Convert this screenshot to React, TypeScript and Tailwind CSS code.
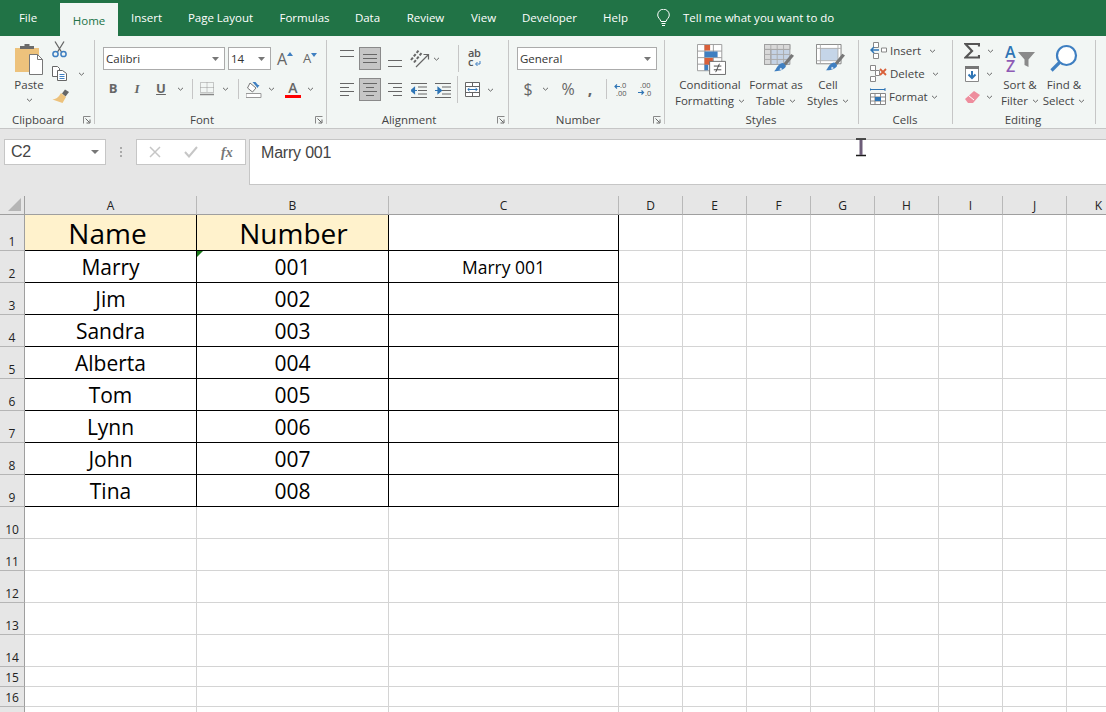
import { FC, ReactNode } from "react"

const ui = "font-['Open_Sans',sans-serif]"

const Chevron: FC<{ className?: string }> = ({ className = "" }) => (
  <svg width="7" height="4" viewBox="0 0 7 4" className={`shrink-0 ${className}`}>
    <path d="M1 0.800 3.500 3.200 6 0.800" fill="none" stroke="#666" strokeWidth="1" />
  </svg>
)

const Launcher: FC = () => (
  <svg width="8" height="8" viewBox="0 0 8 8" className="ml-auto mr-[3px] shrink-0">
    <path d="M0.5 7.5V0.5H7.5" fill="none" stroke="#888" />
    <path d="M2.5 2.5 6.5 6.5M7 3.5V7H3.5" fill="none" stroke="#666" />
  </svg>
)

const Group: FC<{ label: string; labelWidth: string; launcher?: boolean; inner: string; children: ReactNode }> = ({
  label,
  labelWidth,
  launcher,
  inner,
  children,
}) => (
  <div className="flex h-full shrink-0">
    <div className={`flex h-full flex-col ${inner}`}>
      <div className="h-[76px]">{children}</div>
      <div className="flex h-[16px] items-center">
        <span className={`text-center text-[11.5px] leading-4 ${labelWidth}`}>{label}</span>
        {launcher && <Launcher />}
      </div>
    </div>
    <div className="mt-[4px] h-[84px] w-px bg-[#c6c6c6]" />
  </div>
)

const Combo: FC<{ value: string; width: string }> = ({ value, width }) => (
  <div className={`flex h-[23px] items-center justify-between border border-[#ababab] bg-white pl-[2px] pr-[5px] text-[11.5px] text-[#333] ${width}`}>
    <span>{value}</span>
    <svg width="7" height="4" viewBox="0 0 7 4">
      <path d="M0 0h7L3.5 4z" fill="#777" />
    </svg>
  </div>
)

const Sep: FC<{ className: string }> = ({ className }) => <div className={`w-px bg-[#c6c6c6] ${className}`} />

const Lines: FC<{ lines: [number, number, number][]; w?: number; h?: number; className?: string; children?: ReactNode }> = ({
  lines,
  w = 14,
  h = 23,
  className = "",
  children,
}) => (
  <svg width={w} height={h} viewBox={`0 0 ${w} ${h}`} className={`shrink-0 ${className}`}>
    {lines.map(([x1, x2, y]) => (
      <path key={`${x1}-${y}`} d={`M${x1} ${y}H${x2}`} stroke="#666" strokeWidth="1" />
    ))}
    {children}
  </svg>
)

const PasteIcon = () => (
  <svg width="28" height="32" viewBox="0 0 28 32">
    <path d="M0 5h24v24H0z" fill="#edc27c" />
    <path d="M5 6V3h4.500V1h5v2H19v3z" fill="#6b6b6b" />
    <path d="M14.500 11.500h8l5 5v15h-13z" fill="#fff" stroke="#777" />
    <path d="M22.500 11.500v5h5" fill="none" stroke="#777" />
  </svg>
)

const ScissorsIcon = () => (
  <svg width="15" height="17" viewBox="0 0 15 17">
    <path d="M3 0.500 9.500 11M12 0.500 5.500 11" stroke="#666" strokeWidth="1.300" fill="none" />
    <circle cx="3.500" cy="13" r="2.600" fill="none" stroke="#3f7fc1" strokeWidth="1.500" />
    <circle cx="11.500" cy="13" r="2.600" fill="none" stroke="#3f7fc1" strokeWidth="1.500" />
  </svg>
)

const CopyIcon = () => (
  <svg width="15" height="15" viewBox="0 0 15 15">
    <path d="M0.500 0.500h5l2 2v8h-7z" fill="#fff" stroke="#666" />
    <path d="M5.500 4.500h5l4 3v7h-9z" fill="#fff" stroke="#666" />
    <path d="M7.500 8.500h5M7.500 10.500h5M7.500 12.500h5" stroke="#3f7fc1" />
  </svg>
)

const BrushIcon = () => (
  <svg width="18" height="16" viewBox="0 0 18 16">
    <path d="M10 5.500 13 1.500l4 2.500-3.500 4.500z" fill="#666" />
    <path d="M9 5l5 4-3.500 6-10-3.500c3 0 6-2 8.500-6.500z" fill="#edc27c" />
  </svg>
)

const BorderIcon = () => (
  <svg width="14" height="14" viewBox="0 0 14 14">
    <path d="M0.500 0.500h13v10h-13zM7 0.500v10M0.500 5.500h13" fill="none" stroke="#999" strokeDasharray="1 1" />
    <path d="M0 12.500h14" stroke="#888" strokeWidth="1.500" />
  </svg>
)

const FillIcon = () => (
  <svg width="17" height="17" viewBox="0 0 17 17">
    <path d="M4 2 10 7 6.500 11 1.500 7z" fill="#fff" stroke="#777" />
    <path d="M6.500 1h3l2.500 3 1.500 0-2 3z" fill="#3f7fc1" />
    <path d="M0 12.500h15v4H0z" fill="#fff" stroke="#999" />
  </svg>
)

const BigA: FC<{ size: string; up?: boolean }> = ({ size, up }) => (
  <span className={`flex items-start text-[#666] ${size}`}>
    <span className="leading-none">A</span>
    <svg width="6" height="4" viewBox="0 0 6 4" className="mt-[1px]">
      <path d={up ? "M0 4 3 0l3 4z" : "M0 0h6L3 4z"} fill="#3f7fc1" />
    </svg>
  </span>
)

const OrientIcon = () => (
  <svg width="20" height="23" viewBox="0 0 20 23">
    <path d="M1 13 9 3M4 15.500 12 5.500" stroke="#666" strokeWidth="2" strokeDasharray="3 1.500" />
    <path d="M6 20 18 8M13.500 7.500H18.500V12.500" fill="none" stroke="#666" strokeWidth="1.200" />
  </svg>
)

const IndentIcon: FC<{ flip?: boolean }> = ({ flip }) => (
  <svg width="16" height="23" viewBox="0 0 16 23">
    <path d="M0 5.500h16M7 9h9M7 12.500h9M7 16h9M0 19.500h16" stroke="#666" />
    <path d={flip ? "M0 12.500h4M3 9.500l3.500 3-3.500 3z" : "M6 12.500H2M3.500 9.500 0 12.500l3.500 3z"} stroke="#2f75b5" strokeWidth="1.200" fill="#2f75b5" />
  </svg>
)

const WrapIcon = () => (
  <svg width="13" height="23" viewBox="0 0 13 23" className="overflow-visible">
    <text x="0" y="10" fontSize="11" fontWeight="600" fill="#555" fontFamily="Open Sans" letterSpacing="-0.3">ab</text>
    <text x="0" y="19" fontSize="11" fontWeight="600" fill="#555" fontFamily="Open Sans">c</text>
    <path d="M12 14v3H8M9.500 15 7.500 17l2 2" fill="none" stroke="#3f7fc1" />
  </svg>
)

const MergeIcon = () => (
  <svg width="15" height="15" viewBox="0 0 15 15">
    <path d="M0.500 0.500h14v14H0.500zM0.500 4.500h14M0.500 10.500h14M7.500 0.500v4M7.500 10.500v4" fill="#fff" stroke="#666" />
    <path d="M3 7.500h9M4.500 5.800 2.800 7.500l1.700 1.700M10.500 5.800l1.700 1.700-1.700 1.700" fill="none" stroke="#2f75b5" />
  </svg>
)

const DecimalIcon: FC<{ more?: boolean }> = ({ more }) => (
  <svg width="14" height="15" viewBox="0 0 14 15" className="overflow-visible">
    {more ? (
      <>
        <text x="2" y="6" fontSize="7.500" fill="#555" fontFamily="Open Sans">.00</text>
        <text x="7" y="14" fontSize="7.500" fill="#555" fontFamily="Open Sans">.0</text>
        <path d="M0 10.500h5M3.500 8.500l2 2-2 2" fill="none" stroke="#2f75b5" strokeWidth="1.200" />
      </>
    ) : (
      <>
        <text x="6" y="6" fontSize="7.500" fill="#555" fontFamily="Open Sans">.0</text>
        <text x="2" y="14" fontSize="7.500" fill="#555" fontFamily="Open Sans">.00</text>
        <path d="M1 4.500h5M3 2.500l-2 2 2 2" fill="none" stroke="#2f75b5" strokeWidth="1.200" />
      </>
    )}
  </svg>
)

const CondIcon = () => (
  <svg width="29" height="31" viewBox="0 0 31 33">
    <path d="M0.500 0.500h26v28h-26zM0.500 7.500h26M0.500 14.500h26M0.500 21.500h26M8.500 0.500v28M17.500 0.500v28" fill="#fff" stroke="#999" />
    <path d="M8 1h6v6H8zM8 15h9v7H8z" fill="#d9603a" />
    <path d="M8 8h14v6H8zM8 22h4v6H8z" fill="#3f7fc1" />
    <path d="M13.500 18.500h17v14h-17z" fill="#fff" stroke="#666" />
    <path d="M18 23.500h8M18 27.500h8M24 21l-4 9" stroke="#444" fill="none" />
  </svg>
)

const RollerBrush = () => (
  <>
    <path d="M21 22 30 11l3 2-9 11z" fill="#777" />
    <path d="M20 21c2 0 4 2 4 4-3 4-8 5-13 5 3-2 3-7 9-9z" fill="#3f7fc1" />
    <path d="M18 26c1 0 2 1 2 2-1 .7-2 .7-3 0z" fill="#d7e4f2" />
  </>
)

const TableStyleIcon = () => (
  <svg width="30" height="30" viewBox="0 0 33 33">
    <path d="M0.500 0.500h28v22H0.500z" fill="#c5d3e5" stroke="#999" />
    <path d="M0.500 0.500h28v5.500H0.500zM0.500 6v16.500h7V6z" fill="#d9d9d9" stroke="#999" />
    <path d="M7.500 0.500v22M14.500 0.500v22M21.500 0.500v22M0.500 6h28M0.500 11.500h28M0.500 17h28" fill="none" stroke="#aaa" />
    <RollerBrush />
  </svg>
)

const CellStyleIcon = () => (
  <svg width="29" height="29" viewBox="0 0 33 33">
    <path d="M0.500 0.500h28v22H0.500z" fill="#fff" stroke="#777" />
    <path d="M5 5h20v14H5z" fill="#c5d5e8" />
    <path d="M0.500 5h28M5 0.500v22M25 0.500v22M0.500 19h28" fill="none" stroke="#aaa" />
    <RollerBrush />
  </svg>
)

const InsertIcon = () => (
  <svg width="17" height="17" viewBox="0 0 17 17">
    <path d="M3.500 0.500h5v5h-5zM3.500 11.500h5v5h-5zM11.500 6h5v4h-5z" fill="#fff" stroke="#888" />
    <path d="M9 8H1M4 5 1 8l3 3" fill="none" stroke="#2f75b5" strokeWidth="1.500" />
  </svg>
)

const DeleteIcon = () => (
  <svg width="17" height="17" viewBox="0 0 17 17">
    <path d="M0.500 0.500h5v5h-5zM0.500 11.500h5v5h-5zM5.500 5.500h4v5h-4z" fill="#fff" stroke="#888" />
    <path d="M10 4l6 6M16 4l-6 6" stroke="#d9603a" strokeWidth="1.800" />
  </svg>
)

const FormatIcon = () => (
  <svg width="16" height="17" viewBox="0 0 16 17">
    <path d="M0 1.500h15M0 0v3M15 0v3" stroke="#2f75b5" />
    <path d="M0.500 5.500h15v11h-15zM0.500 9h15M0.500 13h15M5 5.500v11M10.500 5.500v11" fill="#fff" stroke="#888" />
    <path d="M5 9h6v4H5z" fill="#2f75b5" />
  </svg>
)

const SigmaIcon = () => (
  <svg width="16" height="16" viewBox="0 0 16 16">
    <path d="M15 3.500V1H1.500L8 8 1.500 14.500H15V12" fill="none" stroke="#555" strokeWidth="2.200" />
  </svg>
)

const FillDownIcon = () => (
  <svg width="14" height="16" viewBox="0 0 14 16">
    <path d="M0.500 0.500h13v15h-13z" fill="#fff" stroke="#888" />
    <path d="M0 0h14v3H0z" fill="#777" />
    <path d="M7 5v7M3.500 8.500 7 12l3.500-3.500" fill="none" stroke="#2f75b5" strokeWidth="2" />
  </svg>
)

const EraserIcon = () => (
  <svg width="15" height="14" viewBox="0 0 15 14">
    <path d="M9 1 15 5 8 13H3L0 9z" fill="#ee8d9d" />
    <path d="M3.500 5.500 9 10" stroke="#fff" />
  </svg>
)

const SortIcon = () => (
  <svg width="30" height="29" viewBox="0 0 30 29" className="overflow-visible">
    <text x="0" y="14" fontSize="16" fontWeight="600" fill="#2f75b5" fontFamily="Open Sans">A</text>
    <text x="1" y="28" fontSize="16" fontWeight="600" fill="#8e5bb5" fontFamily="Open Sans">Z</text>
    <path d="M13 8h17l-6.500 7.500V23l-4-2v-5.500z" fill="#8a8a8a" />
  </svg>
)

const SearchIcon = () => (
  <svg width="28" height="28" viewBox="0 0 28 28">
    <circle cx="16.500" cy="11.500" r="9.500" fill="#fff" stroke="#3f7fc1" strokeWidth="2.200" />
    <path d="M9.500 18.500 1.500 26.500" stroke="#3f7fc1" strokeWidth="3.200" />
  </svg>
)

const BulbIcon = () => (
  <svg width="13" height="18" viewBox="0 0 13 18">
    <path d="M4 12.500C3.500 10 .7 9 .7 6a5.800 5.800 0 0 1 11.600 0c0 3-2.800 4-3.300 6.500z" fill="none" stroke="#fff" />
    <path d="M4.500 14.500h4M5 16.500h3" stroke="#fff" />
  </svg>
)

const Tab: FC<{ label: string; w: string; active?: boolean }> = ({ label, w, active }) => (
  <div
    className={`flex h-full shrink-0 items-center justify-center text-[11.5px] ${w} ${
      active ? "mt-[6px] h-[30px] bg-[#f2f6f4] text-[#217346]" : "text-white"
    }`}
  >
    {label}
  </div>
)

const TabBar = () => (
  <div className="flex h-[36px] items-center bg-[#217346] text-white">
    <Tab label="File" w="w-[56px] mr-[4px]" />
    <Tab label="Home" w="w-[58px]" active />
    <Tab label="Insert" w="w-[57px]" />
    <Tab label="Page Layout" w="w-[91px]" />
    <Tab label="Formulas" w="w-[77px]" />
    <Tab label="Data" w="w-[49px]" />
    <Tab label="Review" w="w-[67px]" />
    <Tab label="View" w="w-[49px]" />
    <Tab label="Developer" w="w-[83px]" />
    <Tab label="Help" w="w-[49px]" />
    <div className="ml-[17px] shrink-0">
      <BulbIcon />
    </div>
    <span className="ml-[13px] text-[11.5px]">Tell me what you want to do</span>
  </div>
)

const Clipboard = () => (
  <Group label="Clipboard" labelWidth="w-[76px]" inner="w-[94px]" launcher>
    <div className="flex">
      <div className="ml-[15px] flex w-[28px] flex-col items-center pt-[7px]">
        <PasteIcon />
        <span className="mt-[2px] text-[11.5px] leading-4">Paste</span>
        <Chevron className="mt-[5px]" />
      </div>
      <div className="ml-[9px] flex flex-col items-start pt-[5px]">
        <ScissorsIcon />
        <div className="mt-[8px] flex items-center">
          <CopyIcon />
          <Chevron className="ml-[11px]" />
        </div>
        <div className="mt-[7px]">
          <BrushIcon />
        </div>
      </div>
    </div>
  </Group>
)

const FontGroup = () => (
  <Group label="Font" labelWidth="w-[214px]" inner="w-[231px]" launcher>
    <div className="pl-[8px] pt-[11px]">
      <div className="flex items-center">
        <Combo value="Calibri" width="w-[122px]" />
        <Combo value="14" width="w-[43px] ml-[3px]" />
        <div className="ml-[6px] w-[20px]">
          <BigA size="text-[16px]" up />
        </div>
        <div className="ml-[6px] w-[16px]">
          <BigA size="text-[13px]" />
        </div>
      </div>
      <div className="mt-[10px] flex h-[18px] items-center text-[13px] text-[#666]">
        <span className="w-[20px] text-center font-bold">B</span>
        <span className="ml-[4px] w-[20px] text-center font-['Liberation_Serif',serif] font-bold italic">I</span>
        <span className="ml-[4px] w-[20px] text-center font-bold underline">U</span>
        <Chevron className="ml-[6px]" />
        <Sep className="ml-[8px] h-[20px]" />
        <div className="ml-[7px]">
          <BorderIcon />
        </div>
        <Chevron className="ml-[8px]" />
        <Sep className="ml-[9px] h-[20px]" />
        <div className="ml-[7px]">
          <FillIcon />
        </div>
        <Chevron className="ml-[5px]" />
        <div className="ml-[10px] flex w-[16px] flex-col items-center">
          <span className="text-[14px] font-semibold leading-[15px]">A</span>
          <div className="h-[3px] w-[16px] bg-[#ff0000]" />
        </div>
        <Chevron className="ml-[6px]" />
      </div>
    </div>
  </Group>
)

const AlignBtn: FC<{ active?: boolean; className?: string; children: ReactNode }> = ({ active, className = "", children }) => (
  <div className={`flex h-[23px] w-[22px] shrink-0 items-center justify-center ${active ? "border border-[#8a8a8a] bg-[#c6c6c6]" : ""} ${className}`}>
    {children}
  </div>
)

const Alignment = () => (
  <Group label="Alignment" labelWidth="w-[164px]" inner="w-[181px]" launcher>
    <div className="pl-[9px] pt-[11px]">
      <div className="flex h-[23px] items-center">
        <AlignBtn>
          <Lines lines={[[0, 14, 3.5], [0, 14, 9.5]]} />
        </AlignBtn>
        <AlignBtn active className="ml-[1px]">
          <Lines lines={[[0, 14, 5.5], [0, 14, 9.5], [0, 14, 13.5]]} h={19} />
        </AlignBtn>
        <AlignBtn className="ml-[3px]">
          <Lines lines={[[0, 14, 13.5], [0, 14, 19.5]]} />
        </AlignBtn>
        <div className="ml-[4px]">
          <OrientIcon />
        </div>
        <Chevron className="ml-[3px]" />
        <Sep className="ml-[18px] h-[27px]" />
        <div className="ml-[9px]">
          <WrapIcon />
        </div>
      </div>
      <div className="mt-[8px] flex h-[23px] items-center">
        <AlignBtn>
          <Lines lines={[[0, 14, 5.5], [0, 9, 9.5], [0, 14, 13.5], [0, 9, 17.5]]} />
        </AlignBtn>
        <AlignBtn active className="ml-[1px]">
          <Lines lines={[[0, 14, 3.5], [3, 11, 7.5], [0, 14, 11.5], [3, 11, 15.5]]} h={19} />
        </AlignBtn>
        <AlignBtn className="ml-[3px]">
          <Lines lines={[[0, 14, 5.5], [5, 14, 9.5], [0, 14, 13.5], [5, 14, 17.5]]} />
        </AlignBtn>
        <div className="ml-[5px]">
          <IndentIcon />
        </div>
        <div className="ml-[8px]">
          <IndentIcon flip />
        </div>
        <Sep className="ml-[6px] h-[27px]" />
        <div className="ml-[7px]">
          <MergeIcon />
        </div>
        <Chevron className="ml-[7px]" />
      </div>
    </div>
  </Group>
)

const NumberGroup = () => (
  <Group label="Number" labelWidth="w-[138px]" inner="w-[155px]" launcher>
    <div className="pl-[8px] pt-[11px]">
      <Combo value="General" width="w-[140px]" />
      <div className="mt-[10px] flex h-[18px] items-center text-[#666]">
        <span className="w-[22px] text-center text-[16px]">$</span>
        <Chevron className="ml-[3px]" />
        <span className="ml-[10px] w-[18px] text-center text-[16px]">%</span>
        <span className="ml-[8px] w-[10px] text-center text-[16px] font-bold">,</span>
        <Sep className="ml-[11px] h-[20px]" />
        <div className="ml-[7px]">
          <DecimalIcon />
        </div>
        <div className="ml-[10px]">
          <DecimalIcon more />
        </div>
      </div>
    </div>
  </Group>
)

const BigButton: FC<{ icon: ReactNode; top: string; bottom: string; w: string; shift?: string }> = ({ icon, top, bottom, w, shift = "" }) => (
  <div className={`flex shrink-0 flex-col items-center pt-[8px] text-[11.5px] leading-4 ${w}`}>
    <div className={`flex h-[33px] items-start ${shift}`}>{icon}</div>
    <span className="whitespace-nowrap">{top}</span>
    <span className="flex items-center whitespace-nowrap">
      {bottom}
      <Chevron className="ml-[4px]" />
    </span>
  </div>
)

const Styles = () => (
  <Group label="Styles" labelWidth="w-[192px]" inner="w-[193px]">
    <div className="flex pl-[10px]">
      <BigButton icon={<CondIcon />} top="Conditional" bottom="Formatting" w="w-[70px]" shift="ml-[2px]" />
      <BigButton icon={<TableStyleIcon />} top="Format as" bottom="Table" w="w-[62px]" shift="ml-[6px]" />
      <BigButton icon={<CellStyleIcon />} top="Cell" bottom="Styles" w="w-[42px]" shift="ml-[4px]" />
    </div>
  </Group>
)

const CellRow: FC<{ icon: ReactNode; label: string; chev: string }> = ({ icon, label, chev }) => (
  <div className="flex h-[23px] items-center">
    {icon}
    <span className="ml-[3px] text-[11.5px]">{label}</span>
    <Chevron className={chev} />
  </div>
)

const Cells = () => (
  <Group label="Cells" labelWidth="w-[92px]" inner="w-[93px]">
    <div className="pl-[11px] pt-[3px]">
      <CellRow icon={<InsertIcon />} label="Insert" chev="ml-[8px]" />
      <CellRow icon={<DeleteIcon />} label="Delete" chev="ml-[7px]" />
      <CellRow icon={<FormatIcon />} label="Format" chev="ml-[3px]" />
    </div>
  </Group>
)

const Editing = () => (
  <Group label="Editing" labelWidth="w-[140px]" inner="w-[142px]">
    <div className="flex pl-[11px]">
      <div className="w-[36px] pt-[3px]">
        <div className="flex h-[23px] items-center">
          <SigmaIcon />
          <Chevron className="ml-[7px]" />
        </div>
        <div className="flex h-[23px] items-center pl-[1px]">
          <FillDownIcon />
          <Chevron className="ml-[7px]" />
        </div>
        <div className="flex h-[23px] items-center pl-[1px]">
          <EraserIcon />
          <Chevron className="ml-[6px]" />
        </div>
      </div>
      <BigButton icon={<SortIcon />} top="Sort &" bottom="Filter" w="w-[40px]" />
      <BigButton icon={<SearchIcon />} top="Find &" bottom="Select" w="w-[48px]" />
    </div>
  </Group>
)

const FormulaBar = () => (
  <div className="flex h-[67px] items-start bg-[#e6e6e6] pl-[4px] pt-[10px] font-['Liberation_Sans',sans-serif] text-[#444]">
    <div className="flex h-[26px] w-[102px] shrink-0 items-center justify-between border border-[#c6c6c6] bg-white pl-[6px] pr-[6px] text-[16px] tracking-[-0.2px]">
      <span>C2</span>
      <svg width="8" height="4" viewBox="0 0 8 4">
        <path d="M0 0h8L4 4z" fill="#777" />
      </svg>
    </div>
    <div className="ml-[14px] mt-[8px] flex w-[5px] shrink-0 flex-col gap-[2px]">
      <div className="h-[2px] w-[2px] bg-[#aaa]" />
      <div className="h-[2px] w-[2px] bg-[#aaa]" />
      <div className="h-[2px] w-[2px] bg-[#aaa]" />
    </div>
    <div className="ml-[11px] flex h-[26px] w-[110px] shrink-0 items-center border border-[#c6c6c6] bg-white pl-[12px]">
      <svg width="12" height="12" viewBox="0 0 12 12">
        <path d="M1 1 11 11M11 1 1 11" stroke="#c6c6c6" strokeWidth="1.500" />
      </svg>
      <svg width="14" height="12" viewBox="0 0 14 12" className="ml-[23px]">
        <path d="M1 6 5 10.500 13 1" fill="none" stroke="#c6c6c6" strokeWidth="2" />
      </svg>
      <span className="ml-[23px] font-['Liberation_Serif',serif] text-[14px] font-bold italic text-[#777]">fx</span>
    </div>
    <div className="ml-[3px] h-[46px] flex-1 border border-r-0 border-[#c6c6c6] bg-white pl-[11px] pt-[3px] text-[16px] leading-[20px] tracking-[-0.2px]">
      Marry 001
    </div>
  </div>
)

const columns = ["A", "B", "C", "D", "E", "F", "G", "H", "I", "J", "K"]
const rowNumbers = Array.from({ length: 17 }, (_, i) => i + 1)
const data: [string, string][] = [
  ["Name", "Number"],
  ["Marry", "001"],
  ["Jim", "002"],
  ["Sandra", "003"],
  ["Alberta", "004"],
  ["Tom", "005"],
  ["Lynn", "006"],
  ["John", "007"],
  ["Tina", "008"],
]

const cellText = (row: number, col: number) => {
  if (row === 2 && col === 2) return "Marry 001"
  if (row <= 9 && col < 2) return data[row - 1][col]
  return ""
}

const cellStyle = (row: number, col: number) => {
  if (row === 1 && col === 0) return "text-[28px] pr-[6px]"
  if (row === 1) return "text-[28px] pl-[2px]"
  if (row === 2 && col === 2) return "text-[17.5px] pt-[1px]"
  return "text-[21px] pt-[3px]"
}

const Cell: FC<{ row: number; col: number }> = ({ row, col }) => {
  const inTable = row <= 9 && col < 3
  const header = row === 1 && col < 2
  return (
    <div
      className={`relative flex items-center justify-center overflow-visible whitespace-nowrap border-b border-r font-['Open_Sans',sans-serif] text-black ${cellStyle(row, col)} ${
        inTable ? "border-black" : "border-[#d4d4d4]"
      } ${header ? "bg-[#fff2cc]" : "bg-white"}`}
    >
      {cellText(row, col)}
      {row === 2 && col === 1 && (
        <svg width="6" height="6" viewBox="0 0 6 6" className="absolute left-0 top-0">
          <path d="M0 0h6L0 6z" fill="#1a7a1a" />
        </svg>
      )}
    </div>
  )
}

const Sheet = () => (
  <div className="grid flex-1 grid-cols-[25px_172px_192px_230px_64px_64px_64px_64px_64px_64px_64px_64px] grid-rows-[19px_36px_32px_32px_32px_32px_32px_32px_32px_32px_32px_32px_32px_32px_32px_20px_20px_20px] overflow-hidden bg-white">
    <div className="flex items-end justify-end border-b border-r border-[#9f9f9f] bg-[#e6e6e6] pb-[3px] pr-[3px]">
      <svg width="13" height="13" viewBox="0 0 13 13">
        <path d="M13 0v13H0z" fill="#b5b5b5" />
      </svg>
    </div>
    {columns.map((c) => (
      <div key={c} className="flex items-center justify-center border-b border-r border-b-[#9f9f9f] border-r-[#b8b8b8] bg-[#e6e6e6] pt-[2px] text-[12px] text-[#222]">
        {c}
      </div>
    ))}
    {rowNumbers.map((row) => (
      <div key={row} className="contents">
        <div className="flex items-end justify-center border-b border-r border-b-[#b5b5b5] border-r-[#9f9f9f] bg-[#e6e6e6] text-[12px] leading-4 text-[#222]">
          {row < 17 ? row : ""}
        </div>
        {columns.map((c, col) => (
          <Cell key={c} row={row} col={col} />
        ))}
      </div>
    ))}
  </div>
)

const App: FC = () => {
  return (
    <div className={`relative flex h-[712px] w-[1106px] flex-col overflow-hidden bg-white text-[#444] ${ui}`}>
      <TabBar />
      <div className="flex h-[93px] border-b border-[#c6c6c6] bg-[#f2f6f4]">
        <Clipboard />
        <FontGroup />
        <Alignment />
        <NumberGroup />
        <Styles />
        <Cells />
        <Editing />
      </div>
      <FormulaBar />
      <Sheet />
      {/* mouse cursor sitting over the formula bar */}
      <svg width="12" height="19" viewBox="0 0 12 19" className="absolute left-[855px] top-[138px]">
        <path d="M1 1h10M1 17.500h10" stroke="#1b1b1b" strokeWidth="1.500" />
        <path d="M4.500 2h3v15h-3z" fill="#6d5d78" />
      </svg>
    </div>
  )
}

export default App
